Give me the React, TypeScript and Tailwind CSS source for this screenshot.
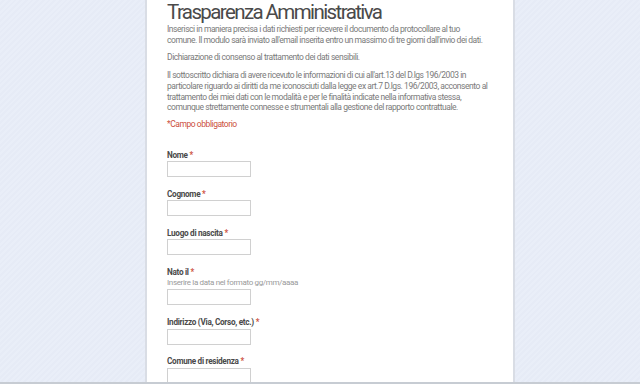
export default function App() {
  const fields = [
    { label: 'Nome' },
    { label: 'Cognome' },
    { label: 'Luogo di nascita' },
    { label: 'Nato il', help: 'Inserire la data nel formato gg/mm/aaaa' },
    { label: 'Indirizzo (Via, Corso, etc.)' },
    { label: 'Comune di residenza' },
  ]

  return (
    <div className="h-[384px] w-[640px] overflow-hidden flex flex-col font-['Roboto',sans-serif] bg-[repeating-linear-gradient(135deg,#e9eef8_0px,#e9eef8_2px,#e6ebf6_2px,#e6ebf6_4px)]">
      <div className="flex-1 overflow-hidden">
        <div className="ml-[145px] w-[370px] h-full bg-white border-x-2 border-[#d9dde5] pl-[20px] pr-4">
          <h1 className="text-[20.5px] leading-[24px] tracking-[-1.6px] text-[#4a4a4a]">Trasparenza Amministrativa</h1>

          <div className="text-[8.5px] leading-[10.7px] tracking-[-0.45px] text-[#7a7a7a] whitespace-nowrap">
            <p>
              Inserisci in maniera precisa i dati richiesti per ricevere il documento da protocollare al tuo<br />
              comune. Il modulo sarà inviato all'email inserita entro un massimo di tre giorni dall'invio dei dati.
            </p>
            <p className="mt-[7px]">Dichiarazione di consenso al trattamento dei dati sensibili.</p>
            <p className="mt-[7px]">
              Il sottoscritto dichiara di avere ricevuto le informazioni di cui all'art.13 del D.lgs 196/2003 in<br />
              particolare riguardo ai diritti da me iconosciuti dalla legge ex art.7 D.lgs. 196/2003, acconsento al<br />
              trattamento dei miei dati con le modalità e per le finalità indicate nella informativa stessa,<br />
              comunque strettamente connesse e strumentali alla gestione del rapporto contrattuale.
            </p>
            <p className="mt-[6px] text-[8.5px] tracking-[-0.45px] text-[#cc5040]">*Campo obbligatorio</p>
          </div>

          <div className="mt-[20px] flex flex-col gap-[11.6px]">
            {fields.map((f) => (
              <div key={f.label}>
                <div className="text-[8.2px] leading-[10px] font-bold tracking-[-0.3px] text-[#4a4a4a]">
                  {f.label} <span className="text-[#cc5040]">*</span>
                </div>
                {f.help && (
                  <div className="mt-[1px] text-[8px] leading-[10px] tracking-[-0.35px] text-[#9a9a9a]">{f.help}</div>
                )}
                <div className="mt-[1.5px] w-[84px] h-[16px] border border-[#d0d0d0] bg-white" />
              </div>
            ))}
          </div>
        </div>
      </div>
      <div className="h-[2px] bg-[#c7ccd3]" />
    </div>
  )
}
